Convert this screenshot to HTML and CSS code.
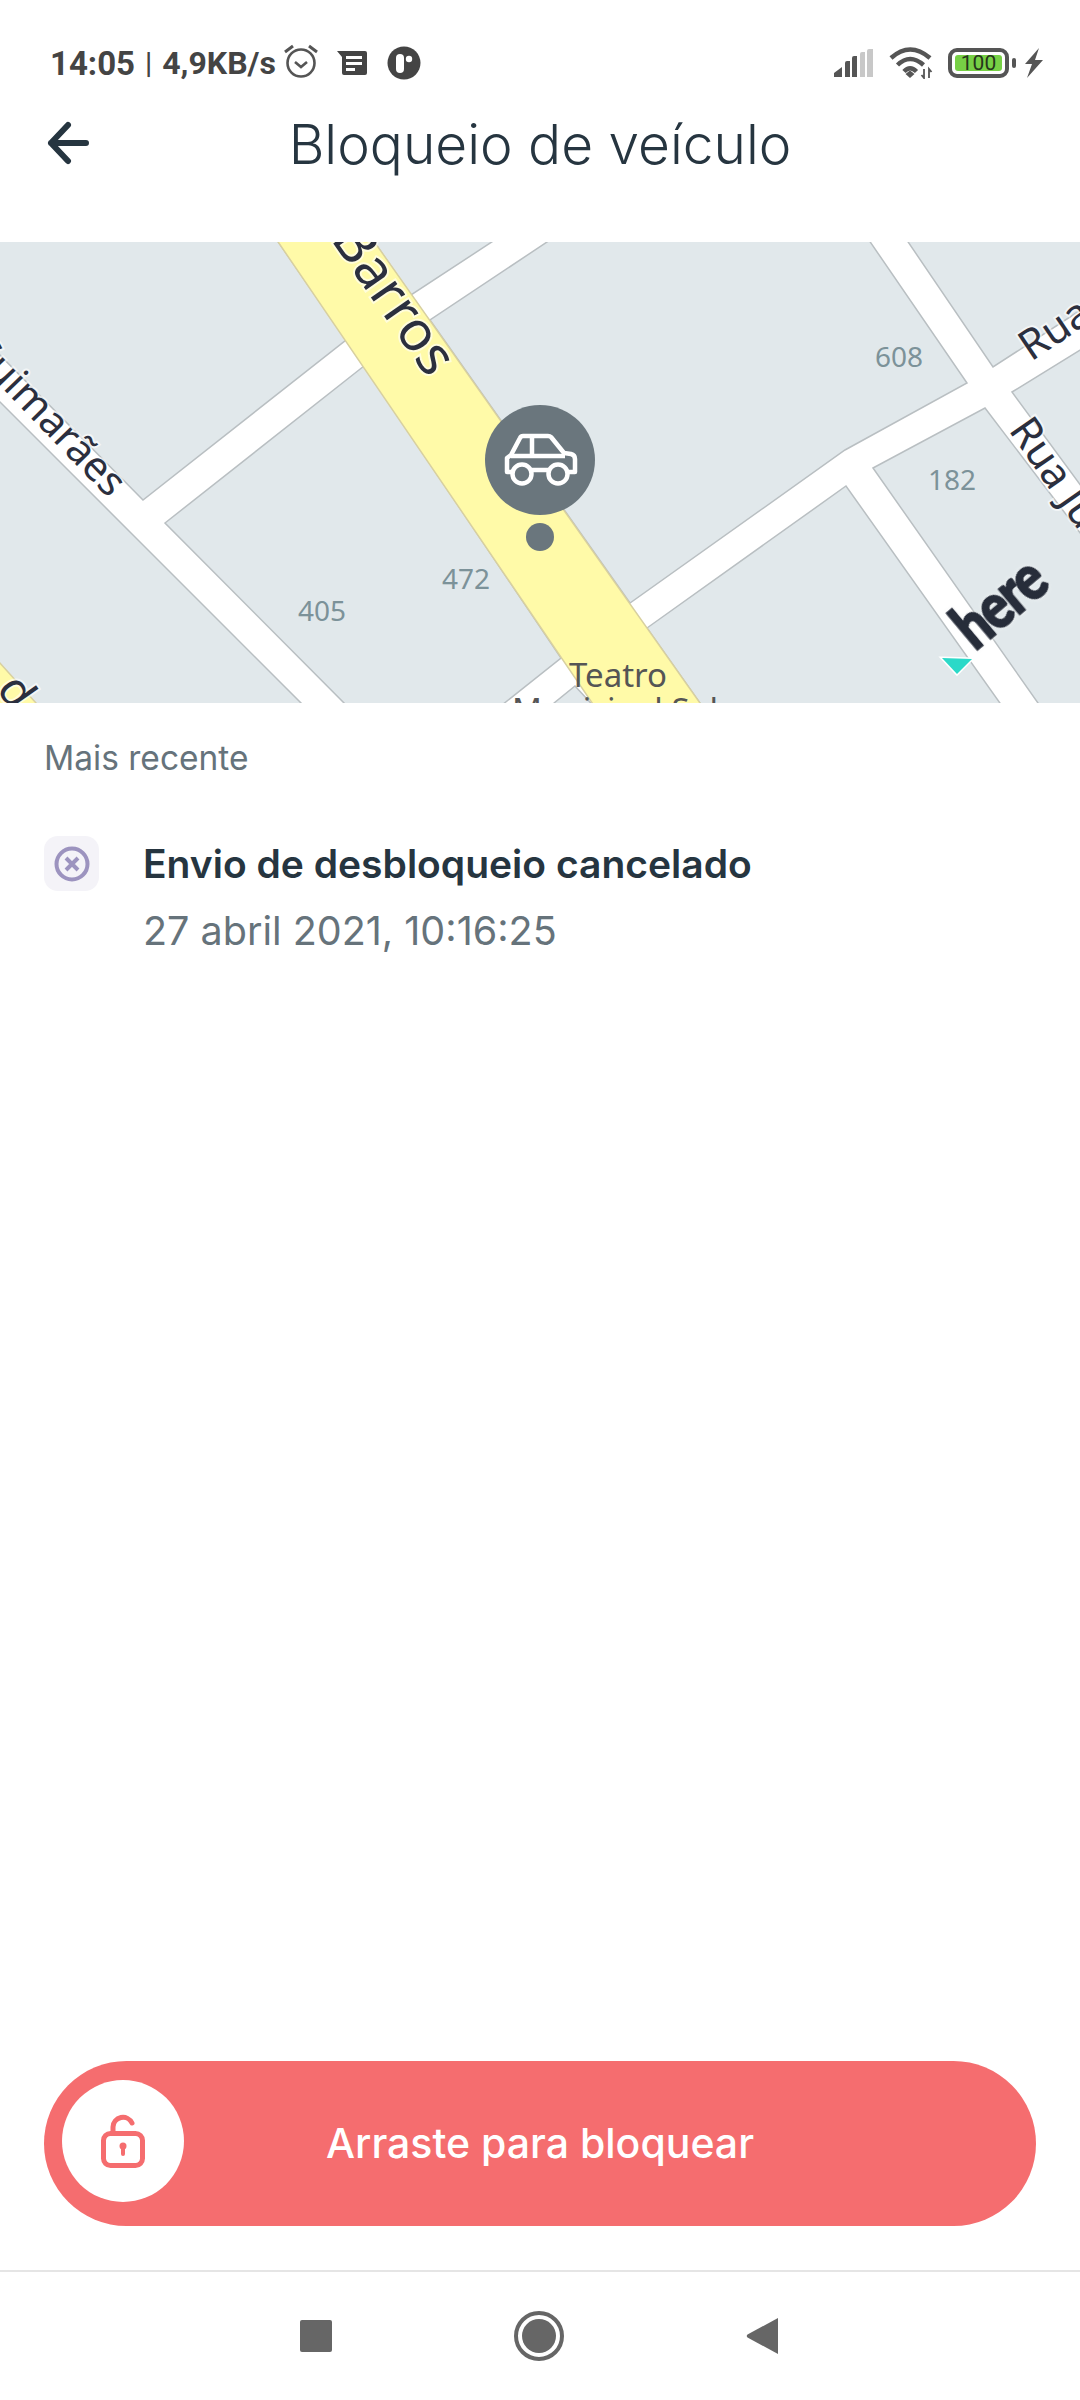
FILE: index.html

```html
<!DOCTYPE html>
<html lang="pt">
<head>
	<meta charset="utf-8">
	<title>Bloqueio de veículo</title>
	<link rel="stylesheet" href="styles.css">
</head>
<body>
	<div class="statusbar">
		<div class="status-left">
			<span class="clock">14:05</span>
			<span class="sep">|</span>
			<span class="speed">4,9KB/s</span>
			<svg class="ic-alarm" width="38" height="38" viewBox="0 0 38 38">
				<circle cx="19" cy="21" r="13.5" fill="none" stroke="#555" stroke-width="2.6"/>
				<path d="M13 20l6 5 6-5" fill="none" stroke="#555" stroke-width="2.6"/>
				<path d="M3 10l8-6M35 10l-8-6" fill="none" stroke="#555" stroke-width="3"/>
			</svg>
			<svg class="ic-msg" width="31" height="26" viewBox="0 0 31 26">
				<path d="M0 1h28a2 2 0 0 1 2 2v20a2 2 0 0 1-2 2H7a2 2 0 0 1-2-2V7z" fill="#444"/>
				<path d="M9 6h16v3H9zM9 12h16v3H9zM9 18h9v3H9z" fill="#fff"/>
			</svg>
			<svg class="ic-app" width="34" height="34" viewBox="0 0 34 34">
				<circle cx="17" cy="17" r="16.5" fill="#444"/>
				<rect x="9" y="8" width="8" height="19" rx="4" fill="#fff"/>
				<circle cx="22" cy="13" r="3.2" fill="#fff"/>
			</svg>
		</div>
		<div class="status-right">
			<svg width="40" height="30" viewBox="0 0 40 30">
				<path d="M0 29v-4l8-6v10zM11 29V15q0-2 2-2h3v16zM18 29V10q0-2 2-2h3v21z" fill="#555"/>
				<path d="M26 29V6q0-2 2-2h3v25zM33 29V3q0-2 2-2h4v28z" fill="#c8c8c8"/>
			</svg>
			<svg class="ic-wifi" width="46" height="32" viewBox="0 0 46 32">
				<path d="M2 11Q21-6 41 11M8.500 18Q21 6 34.500 18M15 24.500Q21 18 27.500 24.500" fill="none" stroke="#555" stroke-width="4.500"/>
				<path d="M16.500 27l4.500-3.500 4.500 3.500-4.500 4z" fill="#555"/>
				<path d="M35 22v9l-2.500-3M40 31v-9l2.500 3" fill="none" stroke="#555" stroke-width="1.800"/>
			</svg>
			<div class="battery"><span class="battery-fill">100</span></div>
			<span class="battery-nub"></span>
			<svg class="ic-bolt" width="20" height="30" viewBox="0 0 20 30">
				<path d="M15 0L1 16h7L3 30l16-18h-8z" fill="#555"/>
			</svg>
		</div>
	</div>

	<header class="topbar">
		<svg class="back" width="48" height="44" viewBox="0 0 48 44">
			<path d="M24 4L7 22l17 18M7 22h35" fill="none" stroke="#263540" stroke-width="6" stroke-linecap="round" stroke-linejoin="round"/>
		</svg>
		<h1>Bloqueio de veículo</h1>
	</header>

	<div class="map">
		<svg width="1080" height="461" viewBox="0 242 1080 461">
			<rect x="0" y="242" width="1080" height="461" fill="#fff"/>
			<g class="block">
				<polygon points="-10,230 270,230 346,340 143,500 -10,345"/>
				<polygon points="165,523 364,366 561,658 492,713 354,713"/>
				<polygon points="-10,392 131,533 311,713 -10,713"/>
				<polygon points="366,230 411,295 510,230"/>
				<polygon points="565,230 862,230 967,383 845,450 630,603 430,320"/>
				<polygon points="647,628 846,486 1007,713 707,713"/>
				<polygon points="873,468 985,408 1090,546 1090,713 1045,713"/>
				<polygon points="900,230 993,367 1090,304 1090,230"/>
				<polygon points="1012,392 1090,344 1090,498"/>
				<polygon points="554,703 575,686 600,713 540,713"/>
			</g>
			<polygon class="main-road" points="270,230 366,230 707,713 599,713"/>
			<polygon class="main-road" points="-10,652 36,703 45,713 -10,713"/>

			<text class="street" transform="translate(428 379) rotate(55)" text-anchor="end" font-size="55">Barros</text>
			<text class="street" transform="translate(109 499) rotate(46)" text-anchor="end" font-size="41">Guimarães</text>
			<text class="street" transform="translate(1031 362) rotate(-34)" font-size="42">Rua</text>
			<text class="street" transform="translate(1008 430) rotate(55)" font-size="42">Rua Ju</text>
			<text class="street" transform="translate(12 712) rotate(55)" text-anchor="end" font-size="46">d</text>

			<text class="num" x="899" y="367">608</text>
			<text class="num" x="952" y="490">182</text>
			<text class="num" x="466" y="589">472</text>
			<text class="num" x="322" y="621">405</text>

			<text class="poi" x="618" y="687">Teatro</text>
			<text class="poi" x="615" y="722">Municipal Sol</text>

			<polygon points="942,658 972,659 957,674" fill="#2bd9c8" stroke="#fff" stroke-width="3" paint-order="stroke"/>
			<text class="here-logo" transform="translate(975 652) rotate(-40) scale(0.92 1.12)">here</text>

			<circle cx="540" cy="460" r="55" fill="#6a767d"/>
			<circle cx="540" cy="537" r="14" fill="#6a767d"/>
			<g fill="none" stroke="#fff" stroke-width="4.500" stroke-linejoin="round">
				<path d="M512 472h-5v-14l4-3 9-17q1-2 3-2h25q2 0 3 1l13 16 7 1q4 1 4 5v13h-6M532 470h16"/>
				<path d="M511 456h54M532 436v20"/>
				<circle cx="522" cy="474" r="9.500"/>
				<circle cx="558" cy="474" r="9.500"/>
			</g>
		</svg>
	</div>

	<section class="history">
		<div class="history-title">Mais recente</div>
		<div class="event">
			<div class="event-icon">
				<svg width="36" height="36" viewBox="0 0 36 36">
					<circle cx="18" cy="18" r="15.500" fill="none" stroke="#9c93bf" stroke-width="4"/>
					<path d="M12 12l12 12M24 12L12 24" stroke="#9c93bf" stroke-width="4"/>
				</svg>
			</div>
			<div class="event-text">
				<div class="event-name">Envio de desbloqueio cancelado</div>
				<div class="event-date">27 abril 2021, 10:16:25</div>
			</div>
		</div>
	</section>

	<div class="slider">
		<div class="knob">
			<svg width="50" height="60" viewBox="0 0 50 60">
				<rect x="5.500" y="22.500" width="39" height="32" rx="7" fill="none" stroke="#f56d6f" stroke-width="5"/>
				<path d="M15 22v-6a10 10 0 0 1 19-4" fill="none" stroke="#f56d6f" stroke-width="5" stroke-linecap="round"/>
				<circle cx="25" cy="35" r="3.500" fill="#f56d6f"/>
				<path d="M25 36v7" stroke="#f56d6f" stroke-width="4" stroke-linecap="round"/>
			</svg>
		</div>
		<span class="slider-label">Arraste para bloquear</span>
	</div>

	<nav class="navbar">
		<span class="nav-square"></span>
		<svg width="50" height="50" viewBox="0 0 50 50">
			<circle cx="25" cy="25" r="23" fill="none" stroke="#666" stroke-width="4"/>
			<circle cx="25" cy="25" r="17" fill="#666"/>
		</svg>
		<svg width="32" height="38" viewBox="0 0 32 38">
			<path d="M32 1v36L1.500 20.500q-1.500-1.500 0-3z" fill="#666"/>
		</svg>
	</nav>
</body>
</html>
```

FILE: styles.css

```css
* {
	box-sizing: border-box;
}
html, body {
	margin: 0;
	padding: 0;
}
body {
	width: 1080px;
	height: 2400px;
	background-color: #fff;
	display: flex;
	flex-direction: column;
	font-family: Inter, "Liberation Sans", sans-serif;
	overflow: hidden;
}

/* status bar */
.statusbar {
	height: 90px;
	padding: 42px 36px 0 50px;
	display: flex;
	justify-content: space-between;
	align-items: flex-start;
	font-family: Roboto, sans-serif;
	color: #444;
}
.status-left, .status-right {
	display: flex;
	align-items: center;
	height: 46px;
	margin-top: -2px;
}
.clock {
	font-size: 33px;
	font-weight: 700;
}
.sep {
	font-size: 29px;
	font-weight: 500;
	margin: 0 10px;
}
.speed {
	font-size: 32px;
	font-weight: 700;
}
.ic-alarm {
	margin: -4px 0 0 6px;
}
.ic-msg {
	margin-left: 17px;
}
.ic-app {
	margin-left: 19px;
}
.ic-wifi {
	margin-left: 15px;
}
.battery {
	width: 61px;
	height: 30px;
	margin-left: 13px;
	padding: 3px;
	border: 4px solid #555;
	border-radius: 9px;
}
.battery-fill {
	display: block;
	height: 16px;
	background-color: #77d045;
	border-radius: 3px;
	color: #26361c;
	font-size: 21px;
	line-height: 16px;
	text-align: center;
}
.battery-nub {
	width: 4px;
	height: 10px;
	margin-left: 3px;
	background-color: #555;
	border-radius: 2px;
}
.ic-bolt {
	margin-left: 8px;
}

/* title */
.topbar {
	height: 152px;
	padding: 0 0 46px 44px;
	display: flex;
	align-items: center;
	position: relative;
}
.topbar h1 {
	position: absolute;
	left: 0;
	right: 0;
	top: 1px;
	margin: 0;
	font-size: 55px;
	font-weight: 300;
	line-height: 106px;
	color: #263540;
	text-align: center;
}

/* map */
.map {
	height: 461px;
	overflow: hidden;
}
.map svg {
	display: block;
}
.block polygon {
	fill: #e1e8eb;
	stroke: #b9bfc2;
	stroke-width: 1.5;
}
.main-road {
	fill: #fffaa8;
	stroke: #d8d0a0;
	stroke-width: 1.5;
}
.street {
	font-family: "Noto Sans", sans-serif;
	fill: #2b2f3e;
	stroke: rgba(255, 255, 255, 0.6);
	stroke-width: 4px;
	paint-order: stroke;
}
.num {
	font-family: "Noto Sans", sans-serif;
	font-size: 28px;
	fill: #7c9299;
	text-anchor: middle;
}
.poi {
	font-family: "Noto Sans", sans-serif;
	font-size: 33px;
	fill: #555;
	text-anchor: middle;
}
.here-logo {
	font-family: Lato, sans-serif;
	font-size: 58px;
	font-weight: 900;
	letter-spacing: -2px;
	fill: #272d3a;
	stroke: #272d3a;
	stroke-width: 1.5px;
	filter: drop-shadow(0 0 2px #f4f6f7);
}

/* history */
.history {
	flex: 1;
	padding: 0 44px;
}
.history-title {
	margin-top: 35px;
	font-size: 33.5px;
	line-height: 40px;
	color: #66737b;
}
.event {
	display: flex;
	margin-top: 58px;
}
.event-icon {
	width: 55px;
	height: 55px;
	border-radius: 14px;
	background-color: #f4f3f8;
	display: flex;
	align-items: center;
	justify-content: center;
}
.event-text {
	margin-left: 44px;
	padding-top: 5px;
}
.event-name {
	font-size: 39px;
	font-weight: 600;
	line-height: 46px;
	color: #263540;
}
.event-date {
	margin-top: 21px;
	font-size: 39.5px;
	line-height: 46px;
	color: #66737b;
}

/* slide to lock */
.slider {
	height: 165px;
	margin: 0 44px 44px;
	padding: 19px 0 0 18px;
	background-color: #f56d6f;
	border-radius: 83px;
	position: relative;
}
.knob {
	width: 122px;
	height: 122px;
	border-radius: 50%;
	background-color: #fff;
	display: flex;
	align-items: center;
	justify-content: center;
}
.slider-label {
	position: absolute;
	left: 0;
	right: 0;
	top: 59px;
	font-size: 41px;
	font-weight: 500;
	line-height: 46px;
	color: #fff;
	text-align: center;
}

/* nav bar */
.navbar {
	height: 130px;
	border-top: 2px solid #e5e5e5;
	padding-left: 300px;
	display: flex;
	align-items: center;
	gap: 182px;
}
.nav-square {
	width: 32px;
	height: 32px;
	background-color: #666;
	border-radius: 2px;
}
.navbar svg {
	display: block;
}
```
